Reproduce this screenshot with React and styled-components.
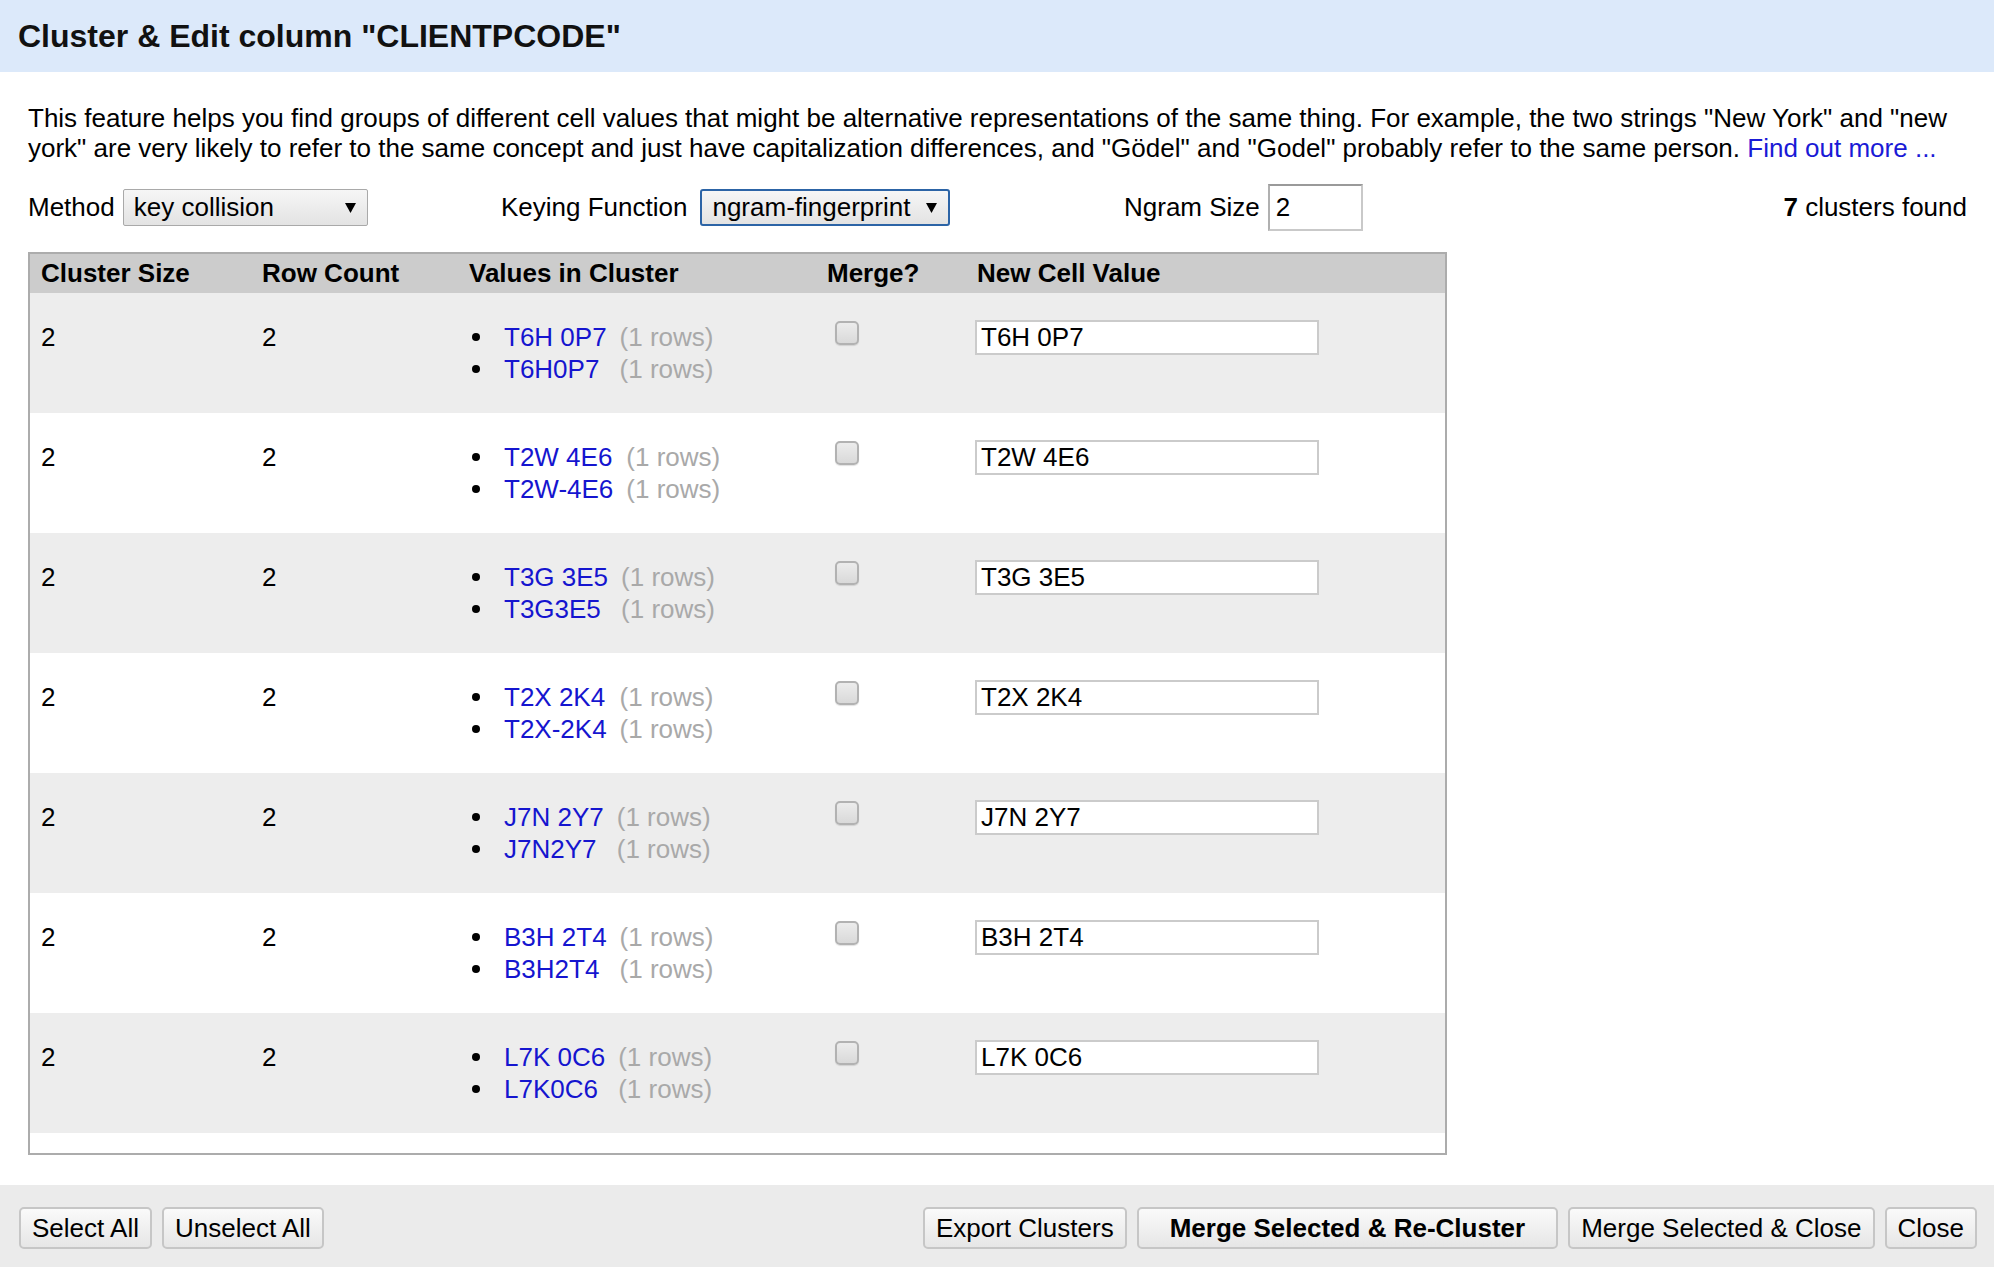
import React from "react";
import styled, { createGlobalStyle } from "styled-components";

const GlobalStyle = createGlobalStyle`
  html, body {
    margin: 0;
    padding: 0;
    background: #fff;
  }
  body {
    font-family: "Liberation Sans", Arial, sans-serif;
    font-size: 26px;
    color: #000;
  }
`;

const Page = styled.div`
  display: flex;
  flex-direction: column;
  height: 100vh;
  overflow: hidden;
`;

const Header = styled.div`
  height: 72px;
  display: flex;
  align-items: center;
  padding-left: 18px;
  background: #dce9fa;
`;

const Title = styled.h1`
  margin: 0;
  font-size: 32px;
  font-weight: bold;
  color: #111;
`;

const Body = styled.div`
  padding: 31px 27px 0 28px;
`;

const Intro = styled.p`
  margin: 0;
  line-height: 30px;
`;

const Link = styled.a`
  color: #1a1ad6;
  text-decoration: none;
`;

const Controls = styled.div`
  display: grid;
  grid-template-columns: 473px 623px 1fr auto;
  align-items: center;
  height: 47px;
  margin-top: 21px;
`;

const Field = styled.div`
  display: flex;
  align-items: center;
  gap: ${(p) => p.$gap || 10}px;
`;

const FakeSelect = styled.div`
  box-sizing: border-box;
  width: ${(p) => p.$width}px;
  height: 37px;
  display: flex;
  align-items: center;
  justify-content: space-between;
  padding: 0 11px 0 10px;
  border: ${(p) => (p.$focused ? "2px solid #2c64a6" : "1px solid #a9a9a9")};
  border-radius: ${(p) => (p.$focused ? "3px" : "2px")};
  background: linear-gradient(#f6f6f6, #e3e3e3);
`;

const NgramInput = styled.input`
  box-sizing: border-box;
  width: 95px;
  height: 47px;
  padding: 0 6px;
  font: inherit;
  border: 2px solid #c9c9c9;
  border-top-color: #9a9a9a;
  border-left-color: #b0b0b0;
  background: #fff;
  outline: none;
`;

const Found = styled.div`
  text-align: right;
`;

const TableBox = styled.div`
  margin-top: 21px;
  width: 1419px;
  height: 903px;
  box-sizing: border-box;
  border: 2px solid #acacac;
  overflow: hidden;
  background: #fff;
`;

const Row = styled.div`
  display: grid;
  grid-template-columns: 221px 207px 358px 150px 1fr;
  background: ${(p) => p.$bg};
`;

const HeadCell = styled.div`
  padding: 4px 11px 5px;
  line-height: 30px;
  font-weight: bold;
  white-space: nowrap;
`;

const Cell = styled.div`
  padding: 28px 11px;
  line-height: 32px;
`;

const Values = styled.div`
  display: grid;
  grid-template-columns: 35px auto auto;
  justify-content: start;
`;

const Bullet = styled.span`
  display: flex;
  align-items: center;
  &::before {
    content: "";
    width: 8px;
    height: 8px;
    margin-left: 3px;
    border-radius: 50%;
    background: #000;
  }
`;

const ValueLink = styled.a`
  color: #1515cf;
  text-decoration: none;
  padding-right: 13px;
`;

const Count = styled.span`
  color: #a9a9a9;
`;

const Check = styled.input`
  appearance: none;
  display: block;
  width: 24px;
  height: 24px;
  margin: 0 0 0 8px;
  box-sizing: border-box;
  border: 2px solid #b2b2b2;
  border-radius: 5px;
  background: linear-gradient(#ececec, #d9d9d9);
  box-shadow: 0 1px 1px rgba(0, 0, 0, 0.12);
`;

const NewValue = styled.input`
  display: block;
  box-sizing: border-box;
  width: 344px;
  height: 35px;
  margin: -1px 0 0 -2px;
  padding: 0 4px;
  font: inherit;
  color: #000;
  border: 2px solid #cbcbcb;
  background: #fff;
  outline: none;
`;

const Footer = styled.div`
  margin-top: auto;
  height: 82px;
  box-sizing: border-box;
  padding: 22px 17px 0 19px;
  background: #ebebeb;
  display: flex;
  justify-content: space-between;
  align-items: flex-start;
`;

const ButtonGroup = styled.div`
  display: flex;
  gap: 10px;
`;

const Button = styled.button`
  height: 42px;
  padding: 0 ${(p) => (p.$primary ? 31 : 11)}px;
  font-family: inherit;
  font-size: 26px;
  font-weight: ${(p) => (p.$primary ? "bold" : "normal")};
  color: #000;
  border: 2px solid #c6c6c6;
  border-radius: 5px;
  background: linear-gradient(#fafafa, #e6e6e6);
  cursor: pointer;
`;

const Arrow = () => (
  <svg width="11" height="10" viewBox="0 0 11 10">
    <polygon points="0,0 11,0 5.5,10" fill="#000" />
  </svg>
);

const clusters = [
  { values: ["T6H 0P7", "T6H0P7"] },
  { values: ["T2W 4E6", "T2W-4E6"] },
  { values: ["T3G 3E5", "T3G3E5"] },
  { values: ["T2X 2K4", "T2X-2K4"] },
  { values: ["J7N 2Y7", "J7N2Y7"] },
  { values: ["B3H 2T4", "B3H2T4"] },
  { values: ["L7K 0C6", "L7K0C6"] },
];

export default function App() {
  return (
    <>
      <GlobalStyle />
      <Page>
        <Header>
          <Title>Cluster &amp; Edit column "CLIENTPCODE"</Title>
        </Header>
        <Body>
          <Intro>
            This feature helps you find groups of different cell values that might be alternative
            representations of the same thing. For example, the two strings "New York" and "new
            york" are very likely to refer to the same concept and just have capitalization
            differences, and "Gödel" and "Godel" probably refer to the same person.{" "}
            <Link href="#">Find out more ...</Link>
          </Intro>

          <Controls>
            <Field $gap={8}>
              Method
              <FakeSelect $width={245}>
                key collision
                <Arrow />
              </FakeSelect>
            </Field>
            <Field $gap={13}>
              Keying Function
              <FakeSelect $width={250} $focused>
                ngram-fingerprint
                <Arrow />
              </FakeSelect>
            </Field>
            <Field $gap={8}>
              Ngram Size
              <NgramInput defaultValue="2" />
            </Field>
            <Found>
              <b>7</b> clusters found
            </Found>
          </Controls>

          <TableBox>
            <Row $bg="#cccccc">
              <HeadCell>Cluster Size</HeadCell>
              <HeadCell>Row Count</HeadCell>
              <HeadCell>Values in Cluster</HeadCell>
              <HeadCell>Merge?</HeadCell>
              <HeadCell>New Cell Value</HeadCell>
            </Row>
            {clusters.map((c, i) => (
              <Row key={i} $bg={i % 2 === 0 ? "#ededed" : "#ffffff"}>
                <Cell>2</Cell>
                <Cell>2</Cell>
                <Cell>
                  <Values>
                    {c.values.map((v) => (
                      <React.Fragment key={v}>
                        <Bullet />
                        <ValueLink href="#">{v}</ValueLink>
                        <Count>(1 rows)</Count>
                      </React.Fragment>
                    ))}
                  </Values>
                </Cell>
                <Cell>
                  <Check type="checkbox" />
                </Cell>
                <Cell>
                  <NewValue defaultValue={c.values[0]} />
                </Cell>
              </Row>
            ))}
          </TableBox>
        </Body>

        <Footer>
          <ButtonGroup>
            <Button>Select All</Button>
            <Button>Unselect All</Button>
          </ButtonGroup>
          <ButtonGroup>
            <Button>Export Clusters</Button>
            <Button $primary>Merge Selected &amp; Re-Cluster</Button>
            <Button>Merge Selected &amp; Close</Button>
            <Button>Close</Button>
          </ButtonGroup>
        </Footer>
      </Page>
    </>
  );
}
